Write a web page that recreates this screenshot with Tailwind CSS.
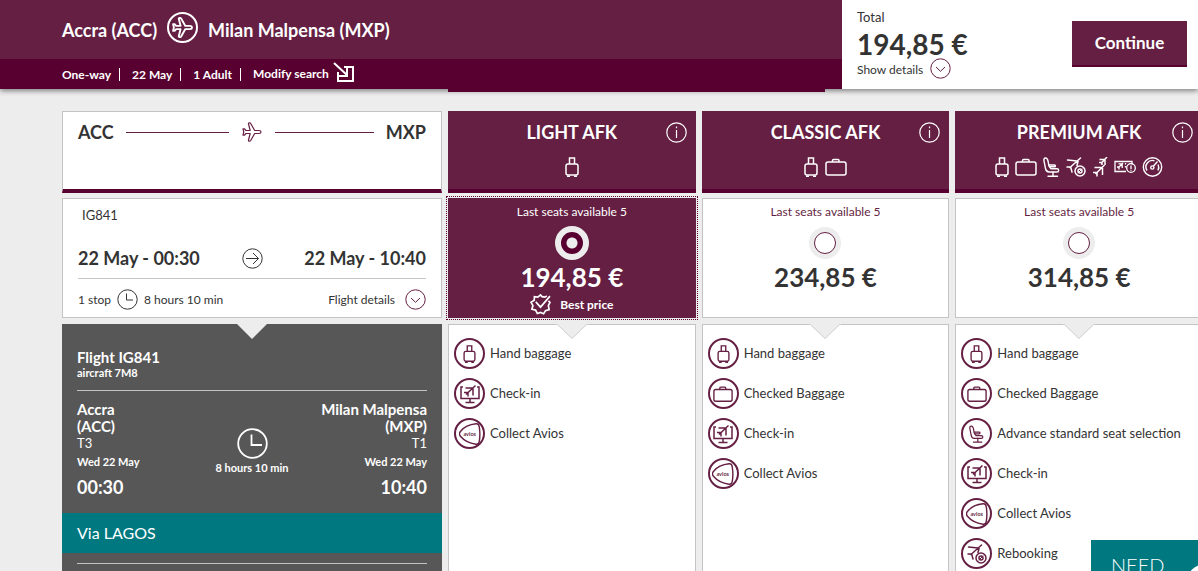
<!DOCTYPE html>
<html lang="en">
<head>
<meta charset="utf-8">
<meta name="viewport" content="width=device-width, initial-scale=1">
<title>Select your flight</title>
<script src="https://cdn.jsdelivr.net/npm/@tailwindcss/browser@4"></script>
</head>
<body class="relative h-screen overflow-hidden bg-[#ededed] font-[Lato,sans-serif] text-[13px] leading-5 text-[#333]">

<svg class="hidden" aria-hidden="true">
  <symbol id="plane" viewBox="0 0 20 20"><path d="M19 10c0-1-1-1.500-2-1.500h-4.300L8.700 1.500C8 .4 6.200.7 6.500 2l1.700 6.500H4L2.500 6.800H1L1.800 10 1 13.200h1.500L4 11.500h4.200L6.500 18c-.3 1.300 1.500 1.600 2.200.5l4-7H17c1 0 2-.5 2-1.500z" fill="none" stroke="currentColor" stroke-linejoin="round"/></symbol>
  <symbol id="hand" viewBox="0 0 14 20"><g fill="none" stroke="currentColor" stroke-width="1.500"><path d="M4.500 7V1h5v6"/><rect x="1" y="7" width="12" height="11" rx="2"/><path d="M2 19.200h3M9 19.200h3"/></g></symbol>
  <symbol id="bag" viewBox="0 0 22 20"><g fill="none" stroke="currentColor" stroke-width="1.500"><rect x="1" y="5" width="20" height="13" rx="2"/><path d="M7.500 5V3.500Q7.500 2.500 8.500 2.500h4.500Q14 2.500 14 3.500V5"/></g></symbol>
  <symbol id="seat" viewBox="0 0 17 20"><g fill="none" stroke="currentColor" stroke-width="1.400" stroke-linecap="round" stroke-linejoin="round"><path d="M2.200 1C.9 1.200.8 2.500 1 3.800l1.500 7.700c.4 2 1.500 3.500 3.500 3.500h8c2.200 0 2.200-3.200 0-3.200H8L6 9 5 4C4.600 2 3.800.8 2.200 1z"/><path d="M6 8h5.500c1.300 0 1.300 1.800 0 1.800H7M10 15v4M5 19.200h9.500"/></g></symbol>
  <symbol id="rebook" viewBox="0 0 20 20"><g fill="none" stroke="currentColor" stroke-width="1.500" stroke-linecap="round"><path d="M14.500 1 4 10.500M11 4 1.500 3M12 4.500 11 8.500M4.500 10 1 10M4.800 10.500 6 15"/><circle cx="14" cy="14" r="5"/><circle cx="14" cy="14" r="2"/><path d="M12 16l4-4" stroke-width="1"/></g></symbol>
  <symbol id="planes" viewBox="0 0 16 20"><g fill="none" stroke="currentColor" stroke-width="1.500"><path d="M12.500 8 3.500 17M2.500 10.500h7M10.500 11v7M1 15.500h4V19.500"/><path d="M15 0 9 6.500M7.500 2.500h5M13 3v5M7 5.500h3V8"/></g></symbol>
  <symbol id="ticket" viewBox="0 0 22 20"><g fill="none" stroke="currentColor" stroke-width="1.300"><path d="M12 14.500H1v-10h17v3"/><path d="m9 6-5 5M4.500 6.800h3.500M8.200 7v4M3 10h2v2.500M11.500 6v1.500M11.500 9v1.500"/><circle cx="17" cy="11" r="4.300"/><path d="M17 8.500V12M17 12.800v1"/></g></symbol>
  <symbol id="gauge" viewBox="0 0 21 20"><g fill="none" stroke="currentColor" stroke-width="1.400"><circle cx="10.500" cy="10" r="9.200"/><path d="M5 13.500a6.500 6.500 0 0 1 7.500-9.700M16 7.500a6.500 6.500 0 0 1 0 6M11.500 9l4-4.500"/><circle cx="10.300" cy="10.500" r="1.600"/></g></symbol>
  <symbol id="checkin" viewBox="0 0 20 20"><g fill="none" stroke="currentColor" stroke-width="1.500"><path d="M3 3H1v11.500h18V3h-2M10 14.500V18M5.500 18.500h9"/><path d="m15.500 1.500-9.500 9M5.500 4h8M13 4.500v7M4 8.500h4v4"/></g></symbol>
  <symbol id="avios" viewBox="0 0 20 20"><path d="M1.500 7.500C5 3 10.500 1.200 15.500.7c2-.2 2.600.8 2.900 2.500.8 5 .8 9.200 0 13.800-.3 1.600-1.200 2.600-3 2.300C10.500 18.500 5 16.500 1.300 12c-1.200-1.500-1.200-3 .2-4.500z" fill="none" stroke="currentColor" stroke-width="1.300"/><text x="4" y="11.500" font-family="Lato" font-size="5" font-weight="700" fill="currentColor">avios</text></symbol>
  <symbol id="down" viewBox="0 0 21 21"><g fill="none" stroke="currentColor"><circle cx="10.500" cy="10.500" r="9.700"/><path d="m6 9 4.500 4.300L15 9"/></g></symbol>
  <symbol id="info" viewBox="0 0 21 21"><g fill="none" stroke="currentColor" stroke-width="1.200"><circle cx="10.500" cy="10.500" r="9.700"/><path d="M10.500 8v8M10.500 4.500v1.700"/></g></symbol>
  <symbol id="clock" viewBox="0 0 21 21"><g fill="none" stroke="currentColor"><circle cx="10.500" cy="10.500" r="9.700"/><path d="M9.500 4.500v6.500h6.500"/></g></symbol>
  <symbol id="notch" viewBox="0 0 32 16"><path d="M0 0h32L16 15z" fill="#ededed"/><path d="m1 0 15 14.500L31 0" fill="none" stroke="#d2d2d2"/></symbol>
</svg>

<header class="relative z-10 flex shadow-[0_2px_5px_rgba(0,0,0,0.45)]">
  <div class="min-w-0 flex-1 text-white">
    <div class="flex h-[59px] items-center bg-[#651f43] pl-[62px]">
      <h1 class="flex items-center gap-[10px] text-[18px] font-bold whitespace-nowrap">
        <span>Accra (ACC)</span>
        <span class="mb-1 flex size-[31px] items-center justify-center rounded-full border-2"><svg class="size-[21px]" stroke-width="1.800"><use href="#plane"/></svg></span>
        <span>Milan Malpensa (MXP)</span>
      </h1>
    </div>
    <div class="flex h-[30px] items-center bg-[#580030] pl-[62px] text-[12px] font-bold">
      <span class="border-r border-white pr-2 leading-[13px]">One-way</span>
      <span class="border-r border-white pr-2 pl-3 leading-[13px]">22 May</span>
      <span class="border-r border-white pr-2 pl-3 leading-[13px]">1 Adult</span>
      <a href="#" class="flex items-center gap-1 pl-3">Modify search
        <svg class="mb-1 h-[21px] w-[22px]" viewBox="0 0 22 21" fill="none" stroke="currentColor" stroke-width="2"><path d="m1 1 13 12M11 5h9v14H5v-9M14 6v8H6"/></svg></a>
    </div>
  </div>
  <div class="flex h-[89px] w-[356px] bg-white pl-[15px]">
    <div class="flex-1">
      <p class="pt-[7px]">Total</p>
      <p class="text-[28px] leading-[34px] font-bold">194,85 €</p>
      <button class="flex h-[18px] items-center gap-[7px] text-[12px]">Show details <svg class="mb-1 size-[21px] text-[#651f43]"><use href="#down"/></svg></button>
    </div>
    <button class="mt-[21px] mr-[11px] h-[46px] w-[115px] border-b-2 border-[#580030] bg-[#651f43] text-[17px] font-bold text-white">Continue</button>
  </div>
  <div class="absolute top-full left-[448px] h-[3px] w-[377px] bg-[#580030]"></div>
</header>

<main class="-mr-[5px] grid grid-cols-[380px_1fr_1fr_1fr] grid-rows-[82px_120px_auto] gap-x-[6px] gap-y-[5px] pt-[22px] pl-[62px]">

  <section class="border border-b-4 border-[#c4c4c4] border-b-[#580030] bg-white px-[15px] pt-2">
    <div class="flex items-center text-[18px] leading-6">
      <span class="flex-1 font-bold"><span class="flex items-center gap-3">ACC<span class="h-px flex-1 bg-[#651f43]"></span></span></span>
      <svg class="mx-[13px] size-5 text-[#651f43]" stroke-width="1.200"><use href="#plane"/></svg>
      <span class="flex-1 font-bold"><span class="flex items-center gap-3"><span class="h-px flex-1 bg-[#651f43]"></span>MXP</span></span>
    </div>
  </section>

  <section class="relative border-b-4 border-[#580030] bg-[#651f43] pt-[9px] text-center text-white">
    <h2 class="text-[18px] leading-6 font-bold">LIGHT AFK</h2>
    <div class="mt-[13px] flex justify-center gap-[7px]"><svg class="h-5 w-[14px]"><use href="#hand"/></svg></div>
    <button aria-label="About Light" class="absolute top-[11px] right-[9px]"><svg class="size-[21px]"><use href="#info"/></svg></button>
  </section>
  <section class="relative border-b-4 border-[#580030] bg-[#651f43] pt-[9px] text-center text-white">
    <h2 class="text-[18px] leading-6 font-bold">CLASSIC AFK</h2>
    <div class="mt-[13px] flex justify-center gap-[7px]"><svg class="h-5 w-[14px]"><use href="#hand"/></svg><svg class="h-5 w-[22px]"><use href="#bag"/></svg></div>
    <button aria-label="About Classic" class="absolute top-[11px] right-[9px]"><svg class="size-[21px]"><use href="#info"/></svg></button>
  </section>
  <section class="relative border-b-4 border-[#580030] bg-[#651f43] pt-[9px] text-center text-white">
    <h2 class="text-[18px] leading-6 font-bold">PREMIUM AFK</h2>
    <div class="mt-[13px] flex justify-center gap-[6px]"><svg class="h-5 w-[14px]"><use href="#hand"/></svg><svg class="h-5 w-[22px]"><use href="#bag"/></svg><svg class="h-5 w-[17px]"><use href="#seat"/></svg><svg class="size-5"><use href="#rebook"/></svg><svg class="h-5 w-4"><use href="#planes"/></svg><svg class="h-5 w-[22px]"><use href="#ticket"/></svg><svg class="h-5 w-[21px]"><use href="#gauge"/></svg></div>
    <button aria-label="About Premium" class="absolute top-[11px] right-[10px]"><svg class="size-[21px]"><use href="#info"/></svg></button>
  </section>

  <section class="border border-[#c4c4c4] bg-white px-[15px] pt-[6px]">
    <p class="pl-1">IG841</p>
    <div class="mt-[18px] grid h-[30px] grid-cols-[1fr_auto_1fr] items-center text-[18px] font-bold">
      <span>22 May - 00:30</span>
      <svg class="size-[21px]" viewBox="0 0 21 21" fill="none" stroke="currentColor"><circle cx="10.500" cy="10.500" r="9.700"/><path d="M4 10.500h12.500M11 5l5.500 5.500L11 16"/></svg>
      <span class="text-right">22 May - 10:40</span>
    </div>
    <div class="mt-[5px] flex items-center justify-between border-t border-[#c4c4c4] pt-[10px] text-[12px]">
      <span class="flex items-center gap-[6px]">1 stop <svg class="size-[21px]"><use href="#clock"/></svg> 8 hours 10 min</span>
      <button class="flex items-center gap-[10px]">Flight details <svg class="size-[21px] text-[#651f43]"><use href="#down"/></svg></button>
    </div>
  </section>

  <label class="flex flex-col items-center bg-[#651f43] pt-1 text-[12px] text-white outline-1 outline-offset-1 outline-dotted outline-[#580030]">
    <span>Last seats available 5</span>
    <input type="radio" name="fare" checked class="mt-1 size-[34px] appearance-none rounded-full border-[6px] border-[#ededed] bg-[radial-gradient(circle,#ededed_5px,#580030_6px)]">
    <span class="text-[26px] leading-[34px] font-bold">194,85 €</span>
    <span class="flex items-center gap-[9px] font-bold"><svg class="size-[21px]" viewBox="0 0 20 20" fill="none" stroke="currentColor" stroke-width="1.600"><path d="m16 2-2 1-2.500-.5L10 .8 7.500 3 4.200 2.500 4 6 1 8l1.800 3-1 3.500 3.500.8L7 18.500l3-1 3 1.300 1.800-3 3.400-1L17.500 11 19 8l-1.500-1.500"/><path d="m5.500 7.500 4.500 5L19 2"/></svg>Best price</span>
  </label>
  <label class="flex flex-col items-center border border-[#c4c4c4] bg-white pt-[3px] text-[12px] text-[#651f43]">
    <span>Last seats available 5</span>
    <span class="mt-1 flex size-[34px] items-center justify-center rounded-full"><input type="radio" name="fare" class="size-[22px] appearance-none rounded-full border border-[#651f43] bg-white shadow-[0_0_0_5px_#ededed]"></span>
    <span class="text-[26px] leading-[34px] font-bold text-[#333]">234,85 €</span>
  </label>
  <label class="flex flex-col items-center border border-[#c4c4c4] bg-white pt-[3px] text-[12px] text-[#651f43]">
    <span>Last seats available 5</span>
    <span class="mt-1 flex size-[34px] items-center justify-center rounded-full"><input type="radio" name="fare" class="size-[22px] appearance-none rounded-full border border-[#651f43] bg-white shadow-[0_0_0_5px_#ededed]"></span>
    <span class="text-[26px] leading-[34px] font-bold text-[#333]">314,85 €</span>
  </label>

  <section class="relative mt-px bg-[#575757] pt-6 pb-3 text-white">
    <svg class="absolute top-0 left-1/2 h-4 w-8 -translate-x-1/2" viewBox="0 0 32 16"><path d="M1 0h30L16 15z" fill="#ededed"/></svg>
    <div class="px-[15px] font-bold">
      <h3 class="text-[15px] leading-[18px]">Flight IG841</h3>
      <p class="text-[11px] leading-[14px]">aircraft 7M8</p>
      <hr class="mt-[10px] border-[#c4c4c4]">
      <div class="mt-[10px] grid grid-cols-[1fr_auto_1fr]">
        <div>
          <p class="text-[15px] leading-[17px]">Accra<br>(ACC)</p>
          <p class="text-[13px] leading-[17px] font-normal">T3</p>
          <p class="text-[11px]">Wed 22 May</p>
          <p class="text-[18px] leading-[30px]">00:30</p>
        </div>
        <div class="pt-[27px] text-center text-[11px] leading-[17px]">
          <svg class="mx-auto size-[31px]" viewBox="0 0 31 31" fill="none" stroke="currentColor" stroke-width="1.800"><circle cx="15.500" cy="15.500" r="14.300"/><path d="M14.500 6.500V17H25"/></svg>
          <p>8 hours 10 min</p>
        </div>
        <div class="text-right">
          <p class="text-[15px] leading-[17px]">Milan Malpensa<br>(MXP)</p>
          <p class="text-[13px] leading-[17px] font-normal">T1</p>
          <p class="text-[11px]">Wed 22 May</p>
          <p class="text-[18px] leading-[30px]">10:40</p>
        </div>
      </div>
    </div>
    <p class="mt-[11px] bg-[#007880] px-[15px] text-[16px] leading-10">Via LAGOS</p>
    <hr class="mx-[15px] mt-[10px] border-[#c4c4c4]">
  </section>

  <section class="relative mt-px border border-[#c4c4c4] bg-white px-[5px] pt-[13px]">
    <svg class="absolute -top-px left-1/2 h-4 w-8 -translate-x-1/2"><use href="#notch"/></svg>
    <ul class="flex flex-col gap-[9px]">
      <li class="flex items-center gap-[5px]"><span class="flex size-[31px] items-center justify-center rounded-full border-2 border-[#651f43] text-[#651f43]"><svg class="h-[18px] w-[13px]"><use href="#hand"/></svg></span><span class="pb-[2px]">Hand baggage</span></li>
      <li class="flex items-center gap-[5px]"><span class="flex size-[31px] items-center justify-center rounded-full border-2 border-[#651f43] text-[#651f43]"><svg class="size-5"><use href="#checkin"/></svg></span><span class="pb-[2px]">Check-in</span></li>
      <li class="flex items-center gap-[5px]"><span class="flex size-[31px] items-center justify-center rounded-full border-2 border-[#651f43] text-[#651f43]"><svg class="size-[22px]"><use href="#avios"/></svg></span><span class="pb-[2px]">Collect Avios</span></li>
    </ul>
  </section>
  <section class="relative mt-px border border-[#c4c4c4] bg-white px-[5px] pt-[13px]">
    <svg class="absolute -top-px left-1/2 h-4 w-8 -translate-x-1/2"><use href="#notch"/></svg>
    <ul class="flex flex-col gap-[9px]">
      <li class="flex items-center gap-[5px]"><span class="flex size-[31px] items-center justify-center rounded-full border-2 border-[#651f43] text-[#651f43]"><svg class="h-[18px] w-[13px]"><use href="#hand"/></svg></span><span class="pb-[2px]">Hand baggage</span></li>
      <li class="flex items-center gap-[5px]"><span class="flex size-[31px] items-center justify-center rounded-full border-2 border-[#651f43] text-[#651f43]"><svg class="size-5"><use href="#bag"/></svg></span><span class="pb-[2px]">Checked Baggage</span></li>
      <li class="flex items-center gap-[5px]"><span class="flex size-[31px] items-center justify-center rounded-full border-2 border-[#651f43] text-[#651f43]"><svg class="size-5"><use href="#checkin"/></svg></span><span class="pb-[2px]">Check-in</span></li>
      <li class="flex items-center gap-[5px]"><span class="flex size-[31px] items-center justify-center rounded-full border-2 border-[#651f43] text-[#651f43]"><svg class="size-[22px]"><use href="#avios"/></svg></span><span class="pb-[2px]">Collect Avios</span></li>
    </ul>
  </section>
  <section class="relative mt-px border border-[#c4c4c4] bg-white px-[5px] pt-[13px]">
    <svg class="absolute -top-px left-1/2 h-4 w-8 -translate-x-1/2"><use href="#notch"/></svg>
    <ul class="flex flex-col gap-[9px]">
      <li class="flex items-center gap-[5px]"><span class="flex size-[31px] items-center justify-center rounded-full border-2 border-[#651f43] text-[#651f43]"><svg class="h-[18px] w-[13px]"><use href="#hand"/></svg></span><span class="pb-[2px]">Hand baggage</span></li>
      <li class="flex items-center gap-[5px]"><span class="flex size-[31px] items-center justify-center rounded-full border-2 border-[#651f43] text-[#651f43]"><svg class="size-5"><use href="#bag"/></svg></span><span class="pb-[2px]">Checked Baggage</span></li>
      <li class="flex items-center gap-[5px]"><span class="flex size-[31px] items-center justify-center rounded-full border-2 border-[#651f43] text-[#651f43]"><svg class="h-[18px] w-[15px]"><use href="#seat"/></svg></span><span class="pb-[2px]">Advance standard seat selection</span></li>
      <li class="flex items-center gap-[5px]"><span class="flex size-[31px] items-center justify-center rounded-full border-2 border-[#651f43] text-[#651f43]"><svg class="size-5"><use href="#checkin"/></svg></span><span class="pb-[2px]">Check-in</span></li>
      <li class="flex items-center gap-[5px]"><span class="flex size-[31px] items-center justify-center rounded-full border-2 border-[#651f43] text-[#651f43]"><svg class="size-[22px]"><use href="#avios"/></svg></span><span class="pb-[2px]">Collect Avios</span></li>
      <li class="flex items-center gap-[5px]"><span class="flex size-[31px] items-center justify-center rounded-full border-2 border-[#651f43] text-[#651f43]"><svg class="size-5"><use href="#rebook"/></svg></span><span class="pb-[2px]">Rebooking</span></li>
    </ul>
  </section>
</main>

<aside class="fixed right-0 bottom-0 z-20 h-[31px] w-[107px] overflow-hidden bg-[#007880]">
  <a href="#" class="block pt-[13px] pl-5 text-[20px] leading-6 font-light whitespace-nowrap text-white">NEED</a>
  <span class="absolute top-[24px] left-[96px] size-9 rounded-full bg-white"></span>
</aside>
</body>
</html>
